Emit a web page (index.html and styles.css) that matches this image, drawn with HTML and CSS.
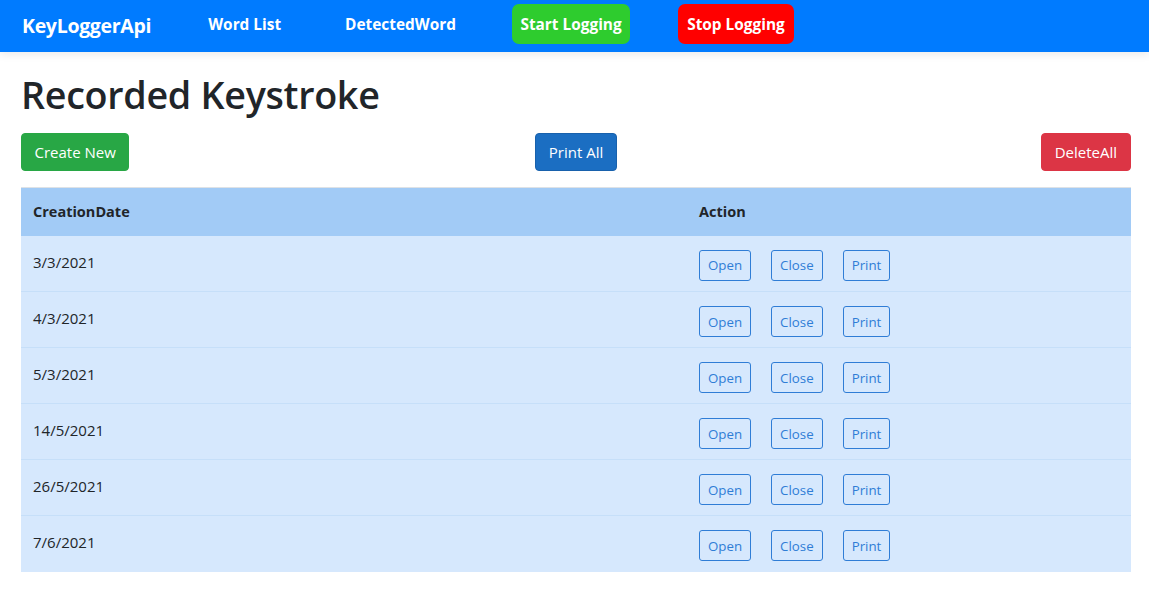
FILE: index.html
```html
<!DOCTYPE html>
<html>
<head>
<meta charset="utf-8">
<link rel="stylesheet" href="styles.css">
</head>
<body>
<header class="navbar">
  <a class="brand" href="#">KeyLoggerApi</a>
  <nav class="nav">
    <a class="nav-link" href="#">Word List</a>
    <a class="nav-link" href="#">DetectedWord</a>
    <a class="nav-btn start" href="#">Start Logging</a>
    <a class="nav-btn stop" href="#">Stop Logging</a>
  </nav>
</header>
<main class="container">
  <h1 class="title">Recorded Keystroke</h1>
  <div class="toolbar">
    <a class="btn btn-success" href="#">Create New</a>
    <a class="btn btn-primary" href="#">Print All</a>
    <a class="btn btn-danger" href="#">DeleteAll</a>
  </div>
  <table class="table">
    <thead>
      <tr><th class="col-date">CreationDate</th><th>Action</th></tr>
    </thead>
    <tbody>
      <tr><td>3/3/2021</td><td><div class="actions"><a class="btn-sm" href="#">Open</a><a class="btn-sm" href="#">Close</a><a class="btn-sm" href="#">Print</a></div></td></tr>
      <tr><td>4/3/2021</td><td><div class="actions"><a class="btn-sm" href="#">Open</a><a class="btn-sm" href="#">Close</a><a class="btn-sm" href="#">Print</a></div></td></tr>
      <tr><td>5/3/2021</td><td><div class="actions"><a class="btn-sm" href="#">Open</a><a class="btn-sm" href="#">Close</a><a class="btn-sm" href="#">Print</a></div></td></tr>
      <tr><td>14/5/2021</td><td><div class="actions"><a class="btn-sm" href="#">Open</a><a class="btn-sm" href="#">Close</a><a class="btn-sm" href="#">Print</a></div></td></tr>
      <tr><td>26/5/2021</td><td><div class="actions"><a class="btn-sm" href="#">Open</a><a class="btn-sm" href="#">Close</a><a class="btn-sm" href="#">Print</a></div></td></tr>
      <tr><td>7/6/2021</td><td><div class="actions"><a class="btn-sm" href="#">Open</a><a class="btn-sm" href="#">Close</a><a class="btn-sm" href="#">Print</a></div></td></tr>
    </tbody>
  </table>
</main>
</body>
</html>
```
FILE: styles.css
```css
* { box-sizing: border-box; }
html, body { margin: 0; padding: 0; }
body {
  font-family: "Open Sans", "Noto Sans", sans-serif;
  font-size: 15px;
  color: #212529;
  background: #fff;
}
a { text-decoration: none; }

.navbar {
  height: 52px;
  background: #007bff;
  display: flex;
  align-items: center;
  padding-left: 22px;
  box-shadow: 0 3px 8px rgba(0,0,0,0.08);
}
.brand {
  color: #fff;
  font-weight: 700;
  font-size: 19.5px;
  letter-spacing: -0.3px;
  margin-top: -2px;
  margin-right: 49px;
}
.nav { display: flex; align-items: center; }
.nav-link {
  color: #fff;
  font-weight: 700;
  font-size: 15.4px;
  padding: 0 8px;
  margin-top: -3px;
  margin-right: 48px;
}
.nav-btn {
  color: #fff;
  font-weight: 700;
  font-size: 15.4px;
  height: 40px;
  display: flex;
  align-items: center;
  padding: 0 8.5px;
  border-radius: 7px;
  margin-top: -4px;
}
.nav-btn.start { background: #2ecc2e; margin-right: 48px; }
.nav-btn.stop { background: #ff0000; padding: 0 9px; }

.container {
  margin: 0 18px 0 21px;
  padding-top: 20px;
}
.title {
  margin: 0;
  font-size: 37.7px;
  font-weight: 600;
  line-height: 46px;
  letter-spacing: -0.3px;
  color: #212529;
}
.toolbar {
  display: grid;
  grid-template-columns: 1fr auto 1fr;
  align-items: center;
  margin-top: 15px;
}
.toolbar .btn-danger { justify-self: end; }
.toolbar .btn-success { justify-self: start; }
.btn {
  display: inline-flex;
  align-items: center;
  height: 38px;
  padding: 0 12.5px;
  border-radius: 4px;
  color: #fff;
  font-size: 15px;
  border: 1px solid transparent;
}
.btn-success { background: #28a745; border-color: #28a745; }
.btn-primary { background: #1b6ec2; border-color: #1861ac; }
.btn-danger { background: #dc3545; border-color: #dc3545; padding: 0 13px; }

.table {
  width: 100%;
  margin-top: 16px;
  border-collapse: collapse;
  background: #d6e8fd;
}
.table th {
  text-align: left;
  background: #a2cbf6;
  font-weight: 700;
  font-size: 14.5px;
  height: 48px;
  padding: 0 12px;
  border-top: 1px solid #dee2e6;
}
.col-date { width: 666px; }
.table td {
  vertical-align: top;
  height: 56px;
  padding: 16px 12px 0 12px;
  font-size: 15px;
  border-top: 1px solid #c6dff9;
}
.table tbody tr:first-child td { border-top: none; }
.table td:first-child { padding-top: 16px; }
.actions { display: flex; gap: 20px; margin-top: -2px; }
.btn-sm {
  display: inline-flex;
  align-items: center;
  height: 31px;
  padding: 0 8px;
  border: 1px solid #2f7dd6;
  border-radius: 3px;
  color: #2f7dd6;
  font-size: 13.3px;
}
```
